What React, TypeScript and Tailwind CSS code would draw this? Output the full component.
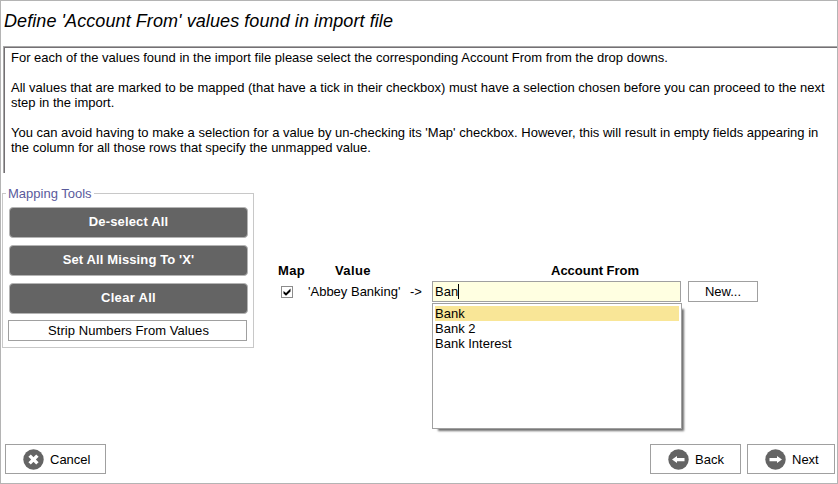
import React from "react";

const tools = [
  { label: "De-select All", spacing: "tracking-[0.15px]" },
  { label: "Set All Missing To 'X'", spacing: "tracking-[0.12px]" },
  { label: "Clear All", spacing: "tracking-[0.3px]" },
];

const lines = [
  "For each of the values found in the import file please select the corresponding Account From from the drop downs.",
  "",
  "All values that are marked to be mapped (that have a tick in their checkbox) must have a selection chosen before you can proceed to the next",
  "step in the import.",
  "",
  "You can avoid having to make a selection for a value by un-checking its 'Map' checkbox. However, this will result in empty fields appearing in",
  "the column for all those rows that specify the unmapped value.",
];

const options = ["Bank", "Bank 2", "Bank Interest"];

function RoundIcon({ kind }: { kind: "close" | "left" | "right" }) {
  return (
    <svg width="21" height="21" viewBox="0 0 21 21" className="shrink-0">
      <circle cx="10.5" cy="10.5" r="10.2" fill="#646464" />
      {kind === "close" && (
        <path d="M6.6 6.6 L14.4 14.4 M14.4 6.6 L6.6 14.4" stroke="#fff" strokeWidth="3.4" fill="none" />
      )}
      {kind === "left" && <path d="M4 10.5 L9 7 V9 H16.5 V12.2 H9 V14 Z" fill="#fff" />}
      {kind === "right" && <path d="M17 10.5 L12 7 V9 H4.5 V12.2 H12 V14 Z" fill="#fff" />}
    </svg>
  );
}

export default function App() {
  return (
    <div className="flex h-[484px] w-[838px] flex-col border border-[#b4b4b4] bg-white font-['Liberation_Sans',Arial,sans-serif] text-[13px] leading-[15px] text-black">
      <h1 className="h-[45px] pt-[9px] pl-[3px] text-[18px] leading-[22px] tracking-[0.08px] whitespace-pre italic">
        Define 'Account From' values found in import file
      </h1>
      <div className="ml-[2px] h-[127px] border-t border-l border-[#a8a8a8]">
        <div className="h-full border-t border-l border-[#747074] pt-[2px] pl-[6px]">
          {lines.map((line, i) => (
            <p key={i} className="h-[15px] whitespace-pre">
              {line}
            </p>
          ))}
        </div>
      </div>
      <div className="flex h-[271px] pl-[1px]">
        <section className="mt-[13px] flex h-[162px] w-[252px] flex-col">
          <div className="-mb-[8px] h-[15px] pl-[4px]">
            <span className="relative bg-white px-[2px] text-[#5a5a9c]">Mapping Tools</span>
          </div>
          <div className="flex h-[155px] flex-col border border-[#c8c8c8] px-[6px] pt-[13px]">
            <div className="flex flex-col gap-[7px]">
              {tools.map((t) => (
                <button
                  key={t.label}
                  className={`h-[31px] w-[239px] rounded-[4px] border border-[#b4b4b4] bg-[#646464] pb-[3px] font-bold text-white ${t.spacing}`}
                >
                  {t.label}
                </button>
              ))}
            </div>
            <button className="-ml-px mt-[6px] h-[21px] w-[239px] border border-[#a0a0a0] bg-white pl-[2px] tracking-[0.06px]">
              Strip Numbers From Values
            </button>
          </div>
        </section>
        <section className="mt-[90px] ml-[24px] grid h-[166px] grid-cols-[30px_124px_249px_70px] grid-rows-[18px_21px_126px]">
          <b className="tracking-[0.3px]">Map</b>
          <b className="pl-[27px] tracking-[0.4px]">Value</b>
          <b className="pl-[119px]">Account From</b>
          <span />
          <div className="pt-[5px] pl-[3px]">
            <div className="flex h-[12px] w-[12px] items-center justify-center border border-[#8c8c8c]">
              <svg width="8" height="8" viewBox="0 0 8 8">
                <path d="M0.5 3 L3 5 L7.5 0.5 V3.5 L3 7.7 L0.5 5.5 Z" fill="#000" />
              </svg>
            </div>
          </div>
          <div className="flex pt-[3px]">
            <span className="w-[102px]">'Abbey Banking'</span>
            <span>-&gt;</span>
          </div>
          <div className="flex border border-[#a0a0a0] bg-[#ffffe1] pt-[2px] pl-[2px]">
            <span>Ban</span>
            <i className="h-[15px] w-px bg-black" />
          </div>
          <button className="ml-[7px] h-[21px] w-[70px] border border-[#a0a0a0] bg-white">New...</button>
          <span />
          <span />
          <div className="mt-px h-[126px] w-[250px] border border-[#a0a0a0] bg-white p-[2px] shadow-[4px_4px_2px_-2px_#00000090]">
            {options.map((o) => (
              <div key={o} className={o === "Bank" ? "h-[15px] bg-[#f9e697]" : "h-[15px]"}>
                {o}
              </div>
            ))}
          </div>
        </section>
      </div>
      <footer className="flex pr-[2px] pl-[4px]">
        <button className="flex h-[30px] w-[101px] items-center gap-[6px] border border-[#a0a0a0] pl-[17px]">
          <RoundIcon kind="close" />
          Cancel
        </button>
        <button className="ml-auto flex h-[30px] w-[91px] items-center gap-[6px] border border-[#a0a0a0] pl-[17px]">
          <RoundIcon kind="left" />
          Back
        </button>
        <button className="ml-[6px] flex h-[30px] w-[88px] items-center gap-[6px] border border-[#a0a0a0] pl-[17px]">
          <RoundIcon kind="right" />
          Next
        </button>
      </footer>
    </div>
  );
}
